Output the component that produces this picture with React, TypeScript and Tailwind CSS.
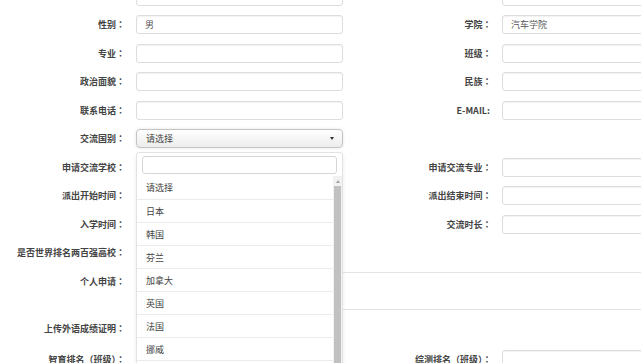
import React from 'react';

const font = { fontFamily: '"Noto Sans CJK SC", "Liberation Sans", sans-serif' };
const colonFont = { fontFamily: '"Noto Sans CJK JP", sans-serif' };

const styles = {
  label: 'shrink-0 text-right text-[9px] font-bold text-[#444] leading-[19px] whitespace-nowrap',
  input: 'h-[19px] w-[207px] shrink-0 rounded-[3px] border border-[#ddd] bg-white px-[8px] text-[9px] leading-[17px] text-[#555] shadow-[inset_0_1px_1px_rgba(0,0,0,0.05)]',
};

const Label: React.FC<{ text: string; right?: boolean; className?: string }> = ({ text, right, className }) => (
  <div className={`${styles.label} ${right ? 'w-[148.5px]' : 'w-[125px]'} ${className ?? ''}`}>
    {text.endsWith('：') ? (
      <>
        {text.slice(0, -1)}
        <span style={colonFont}>：</span>
      </>
    ) : (
      text
    )}
  </div>
);

interface FieldProps {
  label: string;
  value?: string;
  right?: boolean;
  labelClass?: string;
}

const Field: React.FC<FieldProps> = ({ label, value, right, labelClass }) => (
  <div className="flex items-center">
    <Label text={label} right={right} className={labelClass} />
    <div className={`${styles.input} ${right ? 'ml-[10.5px]' : 'ml-[11px]'}`}>{value}</div>
  </div>
);

const Row: React.FC<{ children: React.ReactNode }> = ({ children }) => (
  <div className="flex h-[28.5px] items-start">{children}</div>
);

const Left: React.FC<{ children?: React.ReactNode }> = ({ children }) => (
  <div className="w-[343px] shrink-0">{children}</div>
);

const countries = ['请选择', '日本', '韩国', '芬兰', '加拿大', '英国', '法国', '挪威', '瑞典'];

const Dropdown: React.FC = () => (
  <div className="absolute left-[136px] top-[152px] w-[207px] h-[230px] rounded-[3px] border border-[#e3e3e3] bg-white shadow-[0_2px_4px_rgba(0,0,0,0.08)]">
    <div className="px-[5px] pt-[3px] pb-[2px]">
      <div className="h-[18px] rounded-[3px] border border-[#d5d5d5] bg-white" />
    </div>
    <div className="flex">
      <div className="flex-1 overflow-hidden">
        {countries.map((c, i) => (
          <div
            key={c}
            className={`h-[23px] pl-[9px] text-[9px] leading-[23px] text-[#444] ${i > 0 ? 'border-t border-[#ebebeb]' : ''}`}
          >
            {c}
          </div>
        ))}
      </div>
      <div className="flex w-[9px] flex-col bg-[#f1f1f1]">
        <div className="flex h-[10px] items-center justify-center">
          <div className="h-0 w-0 border-x-[2.5px] border-b-[3px] border-x-transparent border-b-[#a3a3a3]" />
        </div>
        <div className="mx-[1px] flex-1 bg-[#c1c1c1]" />
      </div>
    </div>
  </div>
);

export default function App() {
  return (
    <div className="relative h-[363px] w-[641px] overflow-hidden bg-white" style={font}>
      <div className="-mt-[13.5px]">
        <Row>
          <Left><Field label="" /></Left>
          <Field label="" right />
        </Row>
        <Row>
          <Left><Field label="性别：" value="男" /></Left>
          <Field label="学院：" value="汽车学院" right />
        </Row>
        <Row>
          <Left><Field label="专业：" /></Left>
          <Field label="班级：" right />
        </Row>
        <Row>
          <Left><Field label="政治面貌：" /></Left>
          <Field label="民族：" right />
        </Row>
        <Row>
          <Left><Field label="联系电话：" /></Left>
          <Field label="E-MAIL:" right labelClass="pr-[1.5px]" />
        </Row>
        <Row>
          <Left>
            <div className="flex items-center">
              <Label text="交流国别：" />
              <div className="ml-[11px] flex h-[19px] w-[207px] items-center justify-between rounded-[4px] border border-[#c4c4c4] bg-gradient-to-b from-white to-[#ececec] pl-[9px] pr-[8px] text-[9px] text-[#444] shadow-[0_0_3px_rgba(0,0,0,0.12)]">
                <span>请选择</span>
                <span className="h-0 w-0 border-x-[2.5px] border-t-[3px] border-x-transparent border-t-[#333]" />
              </div>
            </div>
          </Left>
        </Row>
        <Row>
          <Left><Field label="申请交流学校：" /></Left>
          <Field label="申请交流专业：" right />
        </Row>
        <Row>
          <Left><Field label="派出开始时间：" /></Left>
          <Field label="派出结束时间：" right />
        </Row>
        <Row>
          <Left><Field label="入学时间：" /></Left>
          <Field label="交流时长：" right />
        </Row>
        <Row>
          <Left><Field label="是否世界排名两百强高校：" /></Left>
        </Row>
        <div className="flex h-[47px] items-start">
          <Label text="个人申请：" />
          <div className="ml-[11px] -mr-[200px] h-[38px] flex-1 rounded-[3px] border border-[#e3e3e3]" />
        </div>
        <div className="flex h-[19px] items-center">
          <Label text="上传外语成绩证明：" />
        </div>
        <div className="mt-[12px] flex items-start">
          <Left><Field label="智育排名（班级）：" /></Left>
          <Field label="综测排名（班级）：" right />
        </div>
      </div>
      <Dropdown />
    </div>
  );
}
